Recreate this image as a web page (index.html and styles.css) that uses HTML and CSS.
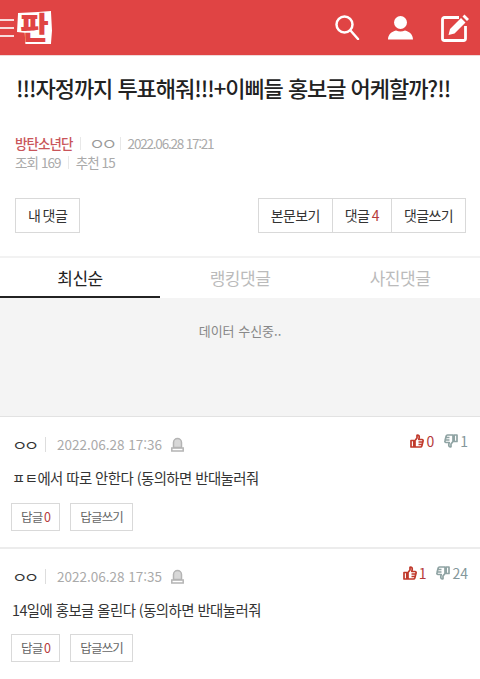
FILE: index.html
```html
<!DOCTYPE html>
<html lang="ko">
<head>
    <meta charset="UTF-8">
    <meta name="viewport" content="width=device-width, initial-scale=1.0">
    <title>판</title>
    <link rel="stylesheet" href="styles.css">
</head>
<body>
    <!-- 상단 헤더 -->
    <header class="top-bar">
        <div class="brand">
            <div class="burger"><span></span><span></span><span></span></div>
            <div class="logo">판</div>
        </div>
        <div class="top-icons">
            <svg width="25" height="25" viewBox="0 0 25 25" fill="none" stroke="#fff" stroke-width="2.500" stroke-linecap="round">
                <circle cx="9.500" cy="9.500" r="8"/>
                <path d="M15.500 15.500l7.500 8.500"/>
            </svg>
            <svg width="25" height="24" viewBox="0 0 25 24" fill="#fff">
                <ellipse cx="12.500" cy="6.500" rx="6.500" ry="6.500"/>
                <path d="M0 23.500c0-5 3.500-8 8-9 3 1.300 6 1.300 9 0 4.500 1 8 4 8 9z"/>
            </svg>
            <svg width="28" height="28" viewBox="0 0 28 28">
                <path d="M18 3.500H3.500a2 2 0 0 0-2 2v19a2 2 0 0 0 2 2h19a2 2 0 0 0 2-2V12" fill="none" stroke="#fff" stroke-width="2.800"/>
                <path d="M7.500 21l1.500-6L20 4l4.500 4.500-11 11z M21.500 2.500L23.500.500 28 5l-2 2z" fill="#fff"/>
            </svg>
        </div>
    </header>

    <h1 class="post-title">!!!자정까지 투표해줘!!!+이삐들 홍보글 어케할까?!!</h1>

    <div class="post-meta">
        <div class="meta-line">
            <span class="board">방탄소년단</span><i class="sep"></i>
            <span class="writer"><b>ㅇㅇ</b></span><i class="sep"></i>
            <span class="stamp">2022.06.28 17:21</span>
        </div>
        <div class="meta-line">
            <span>조회 169</span><i class="sep"></i>
            <span>추천 15</span>
        </div>
    </div>

    <div class="post-actions">
        <a class="btn">내 댓글</a>
        <div class="btn-group">
            <a class="btn">본문보기</a>
            <a class="btn">댓글 <em>4</em></a>
            <a class="btn">댓글쓰기</a>
        </div>
    </div>

    <nav class="tabs">
        <a class="tab active">최신순</a>
        <a class="tab">랭킹댓글</a>
        <a class="tab">사진댓글</a>
    </nav>

    <div class="loading">데이터 수신중..</div>

    <!-- 댓글 목록 -->
    <div class="comment">
        <div class="comment-head">
            <span class="nick"><b>ㅇㅇ</b></span><i class="sep tall"></i>
            <span class="date">2022.06.28 17:36</span>
            <svg class="siren" width="13" height="15" viewBox="0 0 13 15" fill="none" stroke="#b4b4b4" stroke-width="1.500">
                <path d="M2.500 10.500V5.500a4 4 0 0 1 8 0v5z" fill="#d8d8d8"/>
                <path d="M.8 11h11.400v3H.8z"/>
            </svg>
            <div class="votes">
                <svg class="thumb up" width="14" height="14"><use href="#thumb"/></svg>
                <span class="up-count">0</span>
                <svg class="thumb down" width="14" height="14"><use href="#thumb"/></svg>
                <span class="down-count">1</span>
            </div>
        </div>
        <p class="comment-text">ㅍㅌ에서 따로 안한다 (동의하면 반대눌러줘</p>
        <div class="reply-btns">
            <a class="btn small">답글 <em>0</em></a>
            <a class="btn small">답글쓰기</a>
        </div>
    </div>

    <div class="comment">
        <div class="comment-head">
            <span class="nick"><b>ㅇㅇ</b></span><i class="sep tall"></i>
            <span class="date">2022.06.28 17:35</span>
            <svg class="siren" width="13" height="15" viewBox="0 0 13 15" fill="none" stroke="#b4b4b4" stroke-width="1.500">
                <path d="M2.500 10.500V5.500a4 4 0 0 1 8 0v5z" fill="#d8d8d8"/>
                <path d="M.8 11h11.400v3H.8z"/>
            </svg>
            <div class="votes raised">
                <svg class="thumb up" width="14" height="14"><use href="#thumb"/></svg>
                <span class="up-count">1</span>
                <svg class="thumb down" width="14" height="14"><use href="#thumb"/></svg>
                <span class="down-count">24</span>
            </div>
        </div>
        <p class="comment-text">14일에 홍보글 올린다 (동의하면 반대눌러줘</p>
        <div class="reply-btns">
            <a class="btn small">답글 <em>0</em></a>
            <a class="btn small">답글쓰기</a>
        </div>
    </div>

    <svg class="defs" width="0" height="0">
        <symbol id="thumb" viewBox="0 0 14 14">
            <path d="M1 6.500h2.800V13H1z M5 6.500l2-2.500V1.200c1.500-.5 2.500.8 2.200 2.300L8.800 5.500h3.200c1 0 1.300 1 1 1.700L11.800 12c-.2.700-.7 1-1.300 1H5z M8.500 8h4 M8.500 10.500h3.500" fill="none" stroke="currentColor" stroke-width="1.700" stroke-linejoin="round"/>
        </symbol>
    </svg>
</body>
</html>
```
FILE: styles.css
```css
* {
    box-sizing: border-box;
}
body {
    margin: 0;
    background-color: #fff;
    color: #333;
    font-family: "Noto Sans CJK KR", "Noto Sans", sans-serif;
    overflow: hidden;
}
a {
    text-decoration: none;
    color: inherit;
}
em {
    font-style: normal;
    color: #b53a3a;
}
b {
    display: inline-block;
    font-weight: 400;
    letter-spacing: -3px;
    transform: scaleX(1.3);
    transform-origin: left center;
}
.defs {
    display: block;
}

/* header */
.top-bar {
    height: 56px;
    background-color: #e04444;
    border-bottom: 1px solid #f0d8d8;
    display: flex;
    justify-content: space-between;
    align-items: center;
}
.brand {
    display: flex;
    align-items: center;
    gap: 3px;
}
.burger {
    width: 14px;
    display: flex;
    flex-direction: column;
    gap: 6px;
}
.burger span {
    height: 2px;
    background-color: #f7dcdc;
}
.logo {
    width: 35px;
    height: 33px;
    background-color: #fff;
    color: #e04444;
    font-size: 31px;
    font-weight: 900;
    line-height: 30px;
    text-align: center;
    clip-path: polygon(3% 6%, 60% 3%, 97% 0, 100% 60%, 97% 100%, 24% 100%, 22% 66%, 0 64%);
}
.top-icons {
    display: flex;
    align-items: center;
    gap: 28px;
    padding-right: 11px;
}

/* post */
.post-title {
    margin: 0;
    padding: 16px 0 0 16px;
    height: 74px;
    font-size: 22px;
    font-weight: 500;
    line-height: 30px;
    letter-spacing: -1.050px;
    color: #222;
    white-space: nowrap;
}
.post-meta {
    padding: 4px 15px 0;
    height: 68px;
    font-size: 13.500px;
    letter-spacing: -.9px;
    color: #aaa;
}
.meta-line {
    height: 19px;
    line-height: 19px;
    display: flex;
    align-items: center;
}
.board {
    color: #c9555a;
    font-weight: 500;
}
.writer {
    width: 25px;
    padding-left: 1px;
    color: #999;
    white-space: nowrap;
}
.stamp {
    letter-spacing: -1.200px;
}
.sep {
    width: 1px;
    height: 13px;
    margin: 0 7px;
    background-color: #e8e8e8;
}
.post-actions {
    padding: 0 14px 0 15px;
    display: flex;
    justify-content: space-between;
}
.btn {
    display: block;
    height: 35px;
    line-height: 32px;
    padding: 0 12px;
    border: 1px solid #d9d9d9;
    background-color: #fff;
    font-size: 14px;
    letter-spacing: -.6px;
    word-spacing: -1px;
    color: #333;
    white-space: nowrap;
}
.btn-group {
    display: flex;
}
.btn-group .btn + .btn {
    margin-left: -1px;
}

/* tabs */
.tabs {
    margin-top: 23px;
    height: 42px;
    border-top: 2px solid #f2f2f2;
    display: flex;
}
.tab {
    flex: 1;
    text-align: center;
    line-height: 40px;
    font-size: 17px;
    color: #bbb;
    letter-spacing: -.5px;
}
.tab.active {
    color: #222;
    border-bottom: 2px solid #222;
    height: 40px;
}
.loading {
    height: 119px;
    background-color: #f4f4f4;
    border-bottom: 1px solid #e2e2e2;
    padding-top: 23px;
    text-align: center;
    font-size: 13px;
    color: #888;
}

/* comments */
.comment {
    height: 132px;
    padding: 14px 12px 0 11px;
    border-bottom: 2px solid #ececec;
}
.comment-head {
    height: 26px;
    display: flex;
    align-items: center;
}
.nick {
    font-size: 13px;
    color: #333;
    white-space: nowrap;
    width: 23px;
    padding-left: 1px;
}
.sep.tall {
    height: 15px;
    margin: 0 11px 0 11px;
    background-color: #ddd;
}
.date {
    font-size: 13.500px;
    color: #aaa;
}
.siren {
    margin-left: 9px;
}
.votes {
    margin-left: auto;
    margin-top: -6px;
    display: flex;
    align-items: center;
    gap: 2px;
    font-size: 14px;
}
.votes.raised {
    margin-top: -7px;
}
.thumb.up {
    color: #c0392b;
}
.thumb.down {
    color: #8fa3a3;
    transform: rotate(180deg);
    margin-left: 8px;
}
.up-count {
    color: #b53a3a;
}
.down-count {
    color: #84979b;
}
.comment-text {
    margin: 9px 0 0 1px;
    height: 24px;
    font-size: 14.400px;
    line-height: 24px;
    letter-spacing: -.55px;
    color: #333;
}
.reply-btns {
    margin-top: 13px;
    display: flex;
    gap: 10px;
}
.comment + .comment .reply-btns {
    margin-top: 12px;
}
.btn.small {
    height: 28px;
    line-height: 25px;
    padding: 0 9px;
    font-size: 12.500px;
    letter-spacing: -.8px;
    color: #666;
}
```
